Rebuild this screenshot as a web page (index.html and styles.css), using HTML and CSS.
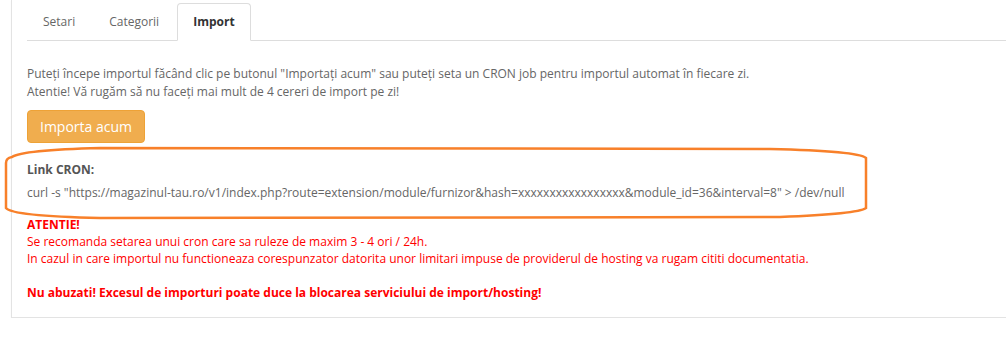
FILE: index.html
```html
<!DOCTYPE html>
<html lang="ro">
<head>
    <meta charset="UTF-8">
    <title>Furnizor - Import</title>
    <link rel="stylesheet" href="styles.css">
</head>
<body>
    <div class="page">
        <div class="panel">
            <!-- Tabs -->
            <ul class="nav-tabs">
                <li><a href="#">Setari</a></li>
                <li><a href="#">Categorii</a></li>
                <li class="active"><a href="#">Import</a></li>
            </ul>

            <!-- Import tab -->
            <div class="tab-content">
                <p class="intro">Puteţi începe importul făcând clic pe butonul "Importaţi acum" sau puteţi seta un CRON job pentru importul automat în fiecare zi.<br>
                Atentie! Vă rugăm să nu faceţi mai mult de 4 cereri de import pe zi!</p>

                <button class="btn-import">Importa acum</button>

                <div class="cron">
                    <p class="cron-label">Link CRON:</p>
                    <p class="cron-link">curl -s "https://magazinul-tau.ro/v1/index.php?route=extension/module/furnizor&amp;hash=xxxxxxxxxxxxxxxxx&amp;module_id=36&amp;interval=8" &gt; /dev/null</p>
                </div>

                <div class="warning">
                    <strong>ATENTIE!</strong><br>
                    Se recomanda setarea unui cron care sa ruleze de maxim 3 - 4 ori / 24h.<br>
                    In cazul in care importul nu functioneaza corespunzator datorita unor limitari impuse de providerul de hosting va rugam cititi documentatia.<br>
                    <br>
                    <strong>Nu abuzati! Excesul de importuri poate duce la blocarea serviciului de import/hosting!</strong>
                </div>
            </div>
        </div>

        <!-- hand drawn highlight -->
        <svg class="highlight" width="1006" height="356" viewBox="0 0 1006 356">
            <path d="M 12 157 Q 22 150 100 148 L 770 149 Q 858 151 866 158 L 866 208 Q 858 214 780 217 L 100 218 Q 12 216 6 208 L 6 163 Q 6 158 12 157 Z" fill="none" stroke="#f8802a" stroke-width="2.5"/>
        </svg>
    </div>
</body>
</html>
```

FILE: styles.css
```css
/* General */
body {
    font-family: "Open Sans", Arial, sans-serif;
    font-size: 12px;
    line-height: 17px;
    color: #666666;
    background-color: #ffffff;
    margin: 0;
    padding: 0;
}

p {
    margin: 0;
}

.page {
    position: relative;
    padding-left: 11px;
}

.panel {
    background-color: #ffffff;
    border-left: 1px solid #e3e3e3;
    border-bottom: 1px solid #e3e3e3;
    box-shadow: 0 1px 1px rgba(0, 0, 0, 0.05);
    padding: 3px 0 16px 15px;
}

/* Tabs */
.nav-tabs {
    display: flex;
    list-style: none;
    margin: 0;
    padding: 0;
    border-bottom: 1px solid #dddddd;
}

.nav-tabs li {
    margin-right: 2px;
    margin-bottom: -1px;
}

.nav-tabs a {
    display: block;
    padding: 10px 15px;
    line-height: 16px;
    border: 1px solid transparent;
    border-radius: 4px 4px 0 0;
    color: #666666;
    text-decoration: none;
}

.nav-tabs .active a {
    color: #333333;
    font-weight: bold;
    background-color: #ffffff;
    border-color: #dddddd;
    border-bottom-color: transparent;
}

/* Import tab */
.tab-content {
    padding-top: 24px;
}

.intro {
    line-height: 18px;
}

.btn-import {
    display: block;
    margin-top: 9px;
    font-family: "Open Sans", Arial, sans-serif;
    font-size: 14px;
    line-height: 21px;
    padding: 5px 12px;
    color: #ffffff;
    background-color: #f0ad4e;
    border: 1px solid #eea236;
    border-radius: 4px;
    cursor: pointer;
}

.cron {
    margin-top: 18px;
}

.cron-label {
    font-weight: bold;
    color: #555555;
    line-height: 18px;
}

.cron-link {
    margin-top: 5px;
    line-height: 18px;
}

.warning {
    margin-top: 14px;
    color: #ff0000;
}

/* Annotation */
.highlight {
    position: absolute;
    left: 0;
    top: 0;
    pointer-events: none;
}
```
